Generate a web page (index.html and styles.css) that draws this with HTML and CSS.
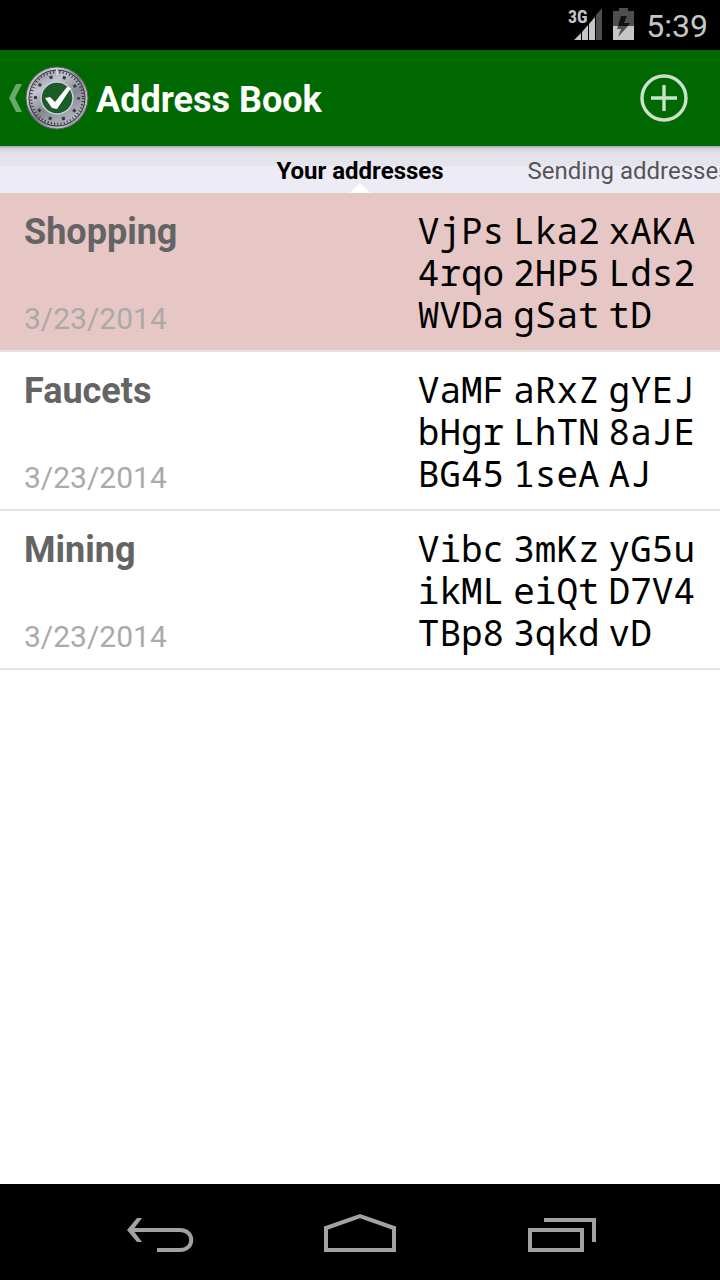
FILE: index.html
```html
<!DOCTYPE html>
<html lang="en">
<head>
<meta charset="utf-8">
<meta name="viewport" content="width=device-width, initial-scale=1">
<title>Address Book</title>
<link rel="stylesheet" href="styles.css">
</head>
<body>
<div class="status">
  <svg class="signal" width="36" height="34" viewBox="0 0 36 34" role="img" aria-label="3G signal">
    <text class="network" x="0" y="15">3G</text>
    <path fill="#c6c6c6" d="M6 32 13 25V32ZM14 24 20 17V32H14ZM21 16 27 9V32H21Z"/>
    <path fill="#4e504e" d="M28 7 34 0V32H28Z"/>
  </svg>
  <svg class="battery" width="21" height="34" viewBox="0 0 21 34" role="img" aria-label="Battery charging">
    <path fill="#4e504e" d="M6 0H15V3H21V18H0V3H6Z"/>
    <path fill="#c6c6c6" d="M0 18H21V32H0Z"/>
    <path fill="#101210" d="M8 8H14L11 15H17L15 18H5Z"/>
    <path fill="#4e504e" d="M5 18H15L5 29 8 21H4Z"/>
  </svg>
  <time class="clock">5:39</time>
</div>
<header class="bar">
  <a class="up" href="#" aria-label="Navigate up">
    <svg width="80" height="64" viewBox="0 0 80 64" aria-hidden="true">
      <defs>
        <linearGradient id="steel" x1="0" y1="0" x2="1" y2="1">
          <stop offset="0" stop-color="#85878f"/><stop offset=".25" stop-color="#d5d6dc"/>
          <stop offset=".5" stop-color="#787a84"/><stop offset=".75" stop-color="#c4c5cd"/>
          <stop offset="1" stop-color="#55575f"/>
        </linearGradient>
        <linearGradient id="dial" x1="0" y1="0" x2=".6" y2="1">
          <stop offset="0" stop-color="#777a84"/><stop offset=".35" stop-color="#c3c5ce"/>
          <stop offset=".65" stop-color="#858791"/><stop offset="1" stop-color="#b4b6c0"/>
        </linearGradient>
      </defs>
      <path fill="#68aa68" d="M8 18H14L7 32 14 46H8L1 32Z"/>
      <circle cx="49" cy="32" r="31" fill="url(#steel)" stroke="#5b5c66"/>
      <circle cx="49" cy="32" r="28" fill="url(#dial)" stroke="#30313a"/>
      <circle cx="49" cy="32" r="26" fill="none" stroke="#34353d" stroke-width="2.5" stroke-dasharray="1 2.27"/>
      <circle cx="49" cy="32" r="21.5" fill="none" stroke="#373841" stroke-width="3" stroke-dasharray="3 10.51" stroke-dashoffset="1.5"/>
      <path stroke="#eee" stroke-width="1.5" d="M49 3V9"/>
      <circle cx="49" cy="32" r="16" fill="#1d5b28" stroke="#c9cfda" stroke-width="1.5"/>
      <path fill="#fff" d="M37 32 42 31 47 36 59 21 63 22 49 43 44 42Z"/>
    </svg>
  </a>
  <h1 class="heading">Address Book</h1>
  <button class="add" type="button" aria-label="Add address">
    <svg width="48" height="48" viewBox="0 0 48 48" fill="none" stroke="#cce1cc" stroke-width="3.4" aria-hidden="true">
      <circle cx="24" cy="24" r="22"/><path d="M24 11V37M11 24H37"/>
    </svg>
  </button>
</header>
<nav class="tabs">
  <a class="tab current" href="#own" aria-current="page">Your addresses</a>
  <a class="tab next" href="#sending">Sending addresses</a>
</nav>
<main class="content" id="own">
  <ul class="list">
    <li class="row selected">
      <div class="info"><h2 class="name">Shopping</h2><time class="date">3/23/2014</time></div>
      <div class="address"><span>VjPs</span><span>Lka2</span><span>xAKA</span><span>4rqo</span><span>2HP5</span><span>Lds2</span><span>WVDa</span><span>gSat</span><span>tD</span></div>
    </li>
    <li class="row">
      <div class="info"><h2 class="name">Faucets</h2><time class="date">3/23/2014</time></div>
      <div class="address"><span>VaMF</span><span>aRxZ</span><span>gYEJ</span><span>bHgr</span><span>LhTN</span><span>8aJE</span><span>BG45</span><span>1seA</span><span>AJ</span></div>
    </li>
    <li class="row">
      <div class="info"><h2 class="name">Mining</h2><time class="date">3/23/2014</time></div>
      <div class="address"><span>Vibc</span><span>3mKz</span><span>yG5u</span><span>ikML</span><span>eiQt</span><span>D7V4</span><span>TBp8</span><span>3qkd</span><span>vD</span></div>
    </li>
  </ul>
</main>
<footer class="system">
  <button class="key" type="button" aria-label="Back">
    <svg width="72" height="40" viewBox="0 0 72 40" aria-hidden="true"><path fill="none" stroke="#a3a1a3" stroke-width="4" d="M9 18H58C73 18 73 38 58 38H35"/><path fill="#a3a1a3" d="M15 6H20L11 18 20 30H15L5 18Z"/></svg>
  </button>
  <button class="key" type="button" aria-label="Home">
    <svg width="72" height="40" viewBox="0 0 72 40" fill="none" stroke="#a3a1a3" stroke-width="4" aria-hidden="true"><path d="M2 38V16L36 4 70 16V38Z"/></svg>
  </button>
  <button class="key" type="button" aria-label="Recent apps">
    <svg width="72" height="40" viewBox="0 0 72 40" fill="none" stroke="#a3a1a3" stroke-width="4" aria-hidden="true"><path d="M4 18H56V38H4ZM18 8H68V30"/></svg>
  </button>
</footer>
</body>
</html>
```
FILE: styles.css
```css
* { box-sizing: border-box; }
body {
  margin: 0;
  min-height: 100vh;
  display: flex;
  flex-direction: column;
  background: #fff;
  font-family: Roboto, "Liberation Sans", sans-serif;
  overflow-x: hidden;
}
svg { display: block; overflow: visible; }
h1, h2, ul { margin: 0; padding: 0; }
button { padding: 0; border: 0; background: none; }
a { color: inherit; text-decoration: none; }

.status {
  height: 50px;
  padding: 0 12px;
  display: flex;
  align-items: center;
  justify-content: flex-end;
  background: #000;
  color: #c6c6c6;
}
.network {
  font-family: "Roboto Condensed", "Liberation Sans Narrow", Roboto, sans-serif;
  font-size: 18px;
  font-weight: 700;
  fill: #c6c6c6;
}
.battery { margin: 0 12px 0 9px; }
.clock { font-size: 32px; line-height: 52px; padding-top: 2px; }

.bar {
  height: 96px;
  padding: 0 32px 0 8px;
  display: flex;
  align-items: center;
  background: #006800;
  color: #fff;
}
.heading { flex: 1; margin-left: 8px; padding-top: 4px; font-size: 36px; line-height: 48px; font-weight: 700; }

.tabs {
  position: relative;
  height: 47px;
  display: grid;
  grid-template-columns: 1fr auto 1fr;
  overflow: hidden;
  background: linear-gradient(#a9a8ad, #d8d7df 3px, #e3e2ea 8px, #e5e4ec 20px, #edebf5 20px);
  color: #555;
  font-size: 24px;
  line-height: 50px;
  white-space: nowrap;
}
.tabs::after {
  content: "";
  position: absolute;
  left: 50%;
  bottom: 0;
  border: 10px solid transparent;
  border-top: 0;
  border-bottom-color: #fff;
  transform: translateX(-50%);
}
.current { grid-column: 2; color: #000; font-weight: 700; }
.next { margin-left: 84px; width: 0; }

.content { flex: 1; }
.list { list-style: none; }
.row {
  display: flex;
  justify-content: space-between;
  padding: 17px 25px 14px 24px;
  border-bottom: 2px solid #e3e3e3;
}
.selected { background: #e6c7c5; }
.info { display: flex; flex-direction: column; justify-content: space-between; }
.name { color: #646464; font-size: 36px; line-height: 44px; font-weight: 700; }
.date { color: #aaa; font-size: 30px; line-height: 34px; }
.address {
  display: grid;
  grid-template-columns: repeat(3, auto);
  column-gap: 9px;
  color: #000;
  font-family: "Droid Sans Mono", "Noto Sans Mono", "DejaVu Sans Mono", monospace;
  font-size: 36px;
  line-height: 42px;
}

.system {
  height: 96px;
  display: flex;
  align-items: center;
  justify-content: center;
  gap: 30px;
  background: #000;
}
.key { width: 172px; height: 96px; display: grid; place-items: center; }
```
